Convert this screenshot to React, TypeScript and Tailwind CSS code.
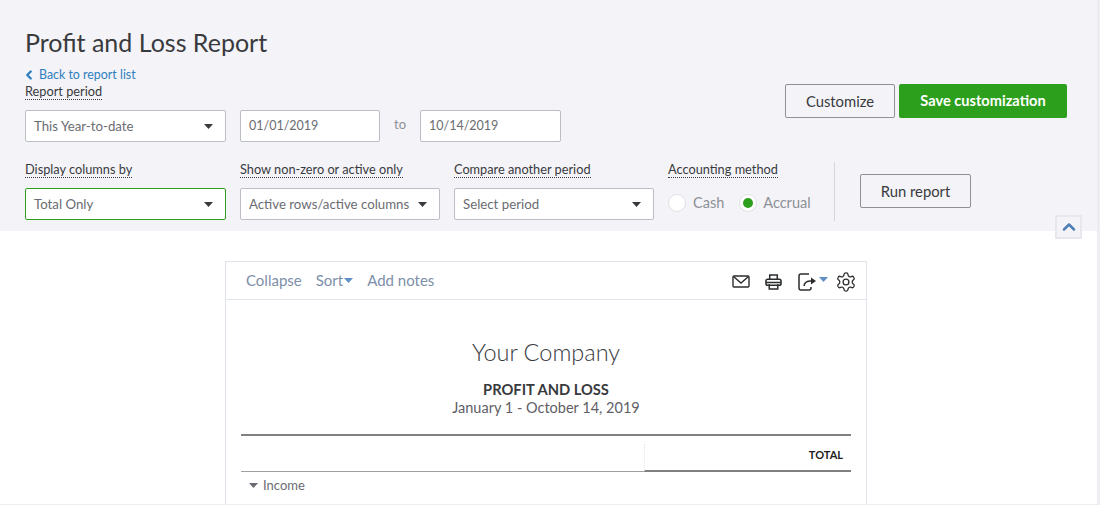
import { ChevronLeft, ChevronUp } from "lucide-react";

function Caret({ className = "" }: { className?: string }) {
  return (
    <svg width="9" height="5" viewBox="0 0 10 6" preserveAspectRatio="none" className={className}>
      <path d="M0 0h10L5 6z" fill="currentColor" />
    </svg>
  );
}

function FieldLabel({ children }: { children: string }) {
  return (
    <span className="self-start border-b border-dotted border-[#393a3d] text-[12.75px] leading-[15px] text-[#393a3d]">
      {children}
    </span>
  );
}

function Select({ value, width, focused }: { value: string; width: string; focused?: boolean }) {
  return (
    <div
      className={`flex h-[32px] items-center justify-between rounded-[2px] border bg-white pl-[8px] pr-[12px] text-[13.25px] text-[#6b6c72] ${width} ${
        focused ? "border-[#2ca01c]" : "border-[#babec5]"
      }`}
    >
      <span className="whitespace-nowrap pt-[2px]">{value}</span>
      <Caret className="text-[#393a3d]" />
    </div>
  );
}

function DateInput({ value, width }: { value: string; width: string }) {
  return (
    <div className={`flex h-[32px] items-center rounded-[2px] border border-[#babec5] bg-white pl-[8px] text-[12.5px] text-[#6b6c72] ${width}`}>
      {value}
    </div>
  );
}

function OutlineButton({ children, width }: { children: string; width: string }) {
  return (
    <button className={`h-[34px] rounded-[2px] border border-[#8d9096] text-[14.8px] text-[#393a3d] ${width}`}>
      {children}
    </button>
  );
}

function Toolbar() {
  return (
    <div className="flex h-[38px] items-center justify-between border-b border-[#dfe4ea] pl-[20px] pr-[9px] text-[15px] text-[#7d8fa8]">
      <div className="flex items-center">
        <span>Collapse</span>
        <span className="ml-[14px]">Sort</span>
        <Caret className="ml-[1px] text-[#5f8fc4]" />
        <span className="ml-[14px]">Add notes</span>
      </div>
      <div className="flex items-center pt-[2px] text-[#2b2c2e]">
        <svg width="18" height="13" viewBox="0 0 18 13" fill="none" stroke="currentColor" strokeWidth="1.4">
          <rect x="1" y="1" width="16" height="11" rx="1" />
          <path d="M1.5 1.5 9 8l7.5-6.5" />
        </svg>
        <svg className="ml-[15px]" width="17" height="18" viewBox="0 0 18 18" fill="none" stroke="currentColor" strokeWidth="1.6">
          <path d="M5 6V1.5h8V6" />
          <rect x="1" y="6" width="16" height="6.5" rx="2" />
          <path d="M4.5 11.5v5h9v-5M1 9.5h16" />
        </svg>
        <svg className="ml-[16px]" width="20" height="18" viewBox="0 0 20 18" fill="none" stroke="currentColor" strokeWidth="1.5">
          <path d="M11 1H3a2 2 0 0 0-2 2v12a2 2 0 0 0 2 2h8a2 2 0 0 0 2-2v-1" />
          <path d="M6 13c.3-3.5 3-5 7-5" />
          <path d="M13 4.5 18 8l-5 3.5z" fill="currentColor" stroke="none" />
        </svg>
        <Caret className="ml-[1px] mb-[4px] text-[#5f8fc4]" />
        <svg className="ml-[7px]" width="22" height="22" viewBox="0 0 24 24" fill="none" stroke="currentColor" strokeWidth="1.4" strokeLinejoin="round">
          <path d="M12.2 2h-.4a2 2 0 0 0-2 2v.2a2 2 0 0 1-1 1.7l-.4.3a2 2 0 0 1-2 0l-.2-.1a2 2 0 0 0-2.7.7l-.2.4a2 2 0 0 0 .7 2.7l.2.1a2 2 0 0 1 1 1.7v.5a2 2 0 0 1-1 1.8l-.2.1a2 2 0 0 0-.7 2.7l.2.4a2 2 0 0 0 2.7.7l.2-.1a2 2 0 0 1 2 0l.4.3a2 2 0 0 1 1 1.7v.2a2 2 0 0 0 2 2h.4a2 2 0 0 0 2-2v-.2a2 2 0 0 1 1-1.7l.4-.3a2 2 0 0 1 2 0l.2.1a2 2 0 0 0 2.7-.7l.2-.4a2 2 0 0 0-.7-2.7l-.2-.1a2 2 0 0 1-1-1.8v-.5a2 2 0 0 1 1-1.7l.2-.1a2 2 0 0 0 .7-2.7l-.2-.4a2 2 0 0 0-2.7-.7l-.2.1a2 2 0 0 1-2 0l-.4-.3a2 2 0 0 1-1-1.7V4a2 2 0 0 0-2-2z" />
          <circle cx="12" cy="12" r="3.2" />
        </svg>
      </div>
    </div>
  );
}

export default function App() {
  return (
    <div className="relative h-[505px] w-[1100px] overflow-hidden bg-white font-['Lato','Liberation_Sans',sans-serif]">
      <header className="h-[231px] bg-[#f3f3f8] pl-[25px] pr-[33px] pt-[26px]">
        <h1 className="text-[25px] leading-[32px] text-[#393a3d]">Profit and Loss Report</h1>

        <div className="mt-[10px] flex items-start justify-between">
          <div>
            <a className="flex h-[14px] items-center text-[12.4px] text-[#2f7fbf]">
              <ChevronLeft size={14} strokeWidth={4} className="-ml-[3px] mr-[3px]" />
              Back to report list
            </a>
            <div className="mt-[2px] flex">
              <FieldLabel>Report period</FieldLabel>
            </div>
            <div className="mt-[10px] flex items-center">
              <Select value="This Year-to-date" width="w-[201px]" />
              <div className="ml-[14px]">
                <DateInput value="01/01/2019" width="w-[140px]" />
              </div>
              <span className="w-[40px] pb-[2px] text-center text-[13px] text-[#8d9096]">to</span>
              <DateInput value="10/14/2019" width="w-[141px]" />
            </div>
          </div>
          <div className="mt-[16px] flex gap-[4px]">
            <OutlineButton width="w-[110px]">Customize</OutlineButton>
            <button className="h-[34px] w-[168px] rounded-[2px] bg-[#2ca01c] text-[14.6px] font-bold text-white">
              Save customization
            </button>
          </div>
        </div>

        <div className="mt-[20px] flex items-start">
          <div className="flex w-[215px] flex-col">
            <FieldLabel>Display columns by</FieldLabel>
            <div className="mt-[10px]">
              <Select value="Total Only" width="w-[201px]" focused />
            </div>
          </div>
          <div className="flex w-[214px] flex-col">
            <FieldLabel>Show non-zero or active only</FieldLabel>
            <div className="mt-[10px]">
              <Select value="Active rows/active columns" width="w-[200px]" />
            </div>
          </div>
          <div className="flex w-[214px] flex-col">
            <FieldLabel>Compare another period</FieldLabel>
            <div className="mt-[10px]">
              <Select value="Select period" width="w-[200px]" />
            </div>
          </div>
          <div className="flex w-[166px] flex-col">
            <FieldLabel>Accounting method</FieldLabel>
            <div className="mt-[15px] flex items-center text-[14.5px] leading-[20px] text-[#8d9096]">
              <span className="h-[18px] w-[18px] rounded-full border border-[#dfe1e5] bg-white" />
              <span className="ml-[7px]">Cash</span>
              <span className="ml-[15px] flex h-[18px] w-[18px] items-center justify-center rounded-full border border-[#dfe1e5] bg-white">
                <span className="h-[10px] w-[10px] rounded-full bg-[#2ca01c]" />
              </span>
              <span className="ml-[6px]">Accrual</span>
            </div>
          </div>
          <div className="h-[59px] w-px bg-[#d4d7dc]" />
          <div className="ml-[25px] mt-[12px]">
            <OutlineButton width="w-[111px]">Run report</OutlineButton>
          </div>
        </div>
      </header>

      {/* collapse tab sits over the header edge */}
      <button className="absolute left-[1055px] top-[215px] flex h-[24px] w-[27px] items-center justify-center border-2 border-[#e6e8ee] bg-[#f3f3f8] text-[#4f7fb5]">
        <ChevronUp size={20} strokeWidth={3} />
      </button>

      <main className="ml-[225px] mt-[30px] h-[244px] w-[642px] border-x border-t border-[#dfe4ea]">
        <Toolbar />
        <div className="px-[15px] pt-[37px] text-center">
          <div className="text-[23.5px] font-light leading-[30px] text-[#393a3d]">Your Company</div>
          <div className="mt-[13px] text-[14.7px] font-bold leading-[18px] text-[#393a3d]">PROFIT AND LOSS</div>
          <div className="text-[14.5px] leading-[20px] text-[#5f6066]">January 1 - October 14, 2019</div>
          <div className="mt-[16px] border-t-2 border-[#808080]" />
          <div className="flex h-[36px]">
            <div className="w-[403px] border-b border-[#a0a0a0]" />
            <div className="mt-[8px] flex flex-1 items-center justify-end border-b-2 border-l border-b-[#808080] border-l-[#e5e5e5] pb-[3px] pr-[8px] text-[11px] font-bold text-[#222222] [border-left-style:dotted]">
              TOTAL
            </div>
          </div>
          <div className="flex items-center pl-[8px] pt-[4px] text-[13px] text-[#6b6c72]">
            <Caret className="mr-[5px]" />
            Income
          </div>
        </div>
      </main>

      {/* page scrollbar track showing at the edges */}
      <div className="absolute right-0 top-0 h-full w-[3px] bg-[#eeeef2]" />
      <div className="absolute bottom-0 left-0 h-px w-full bg-[#eeeef2]" />
    </div>
  );
}
